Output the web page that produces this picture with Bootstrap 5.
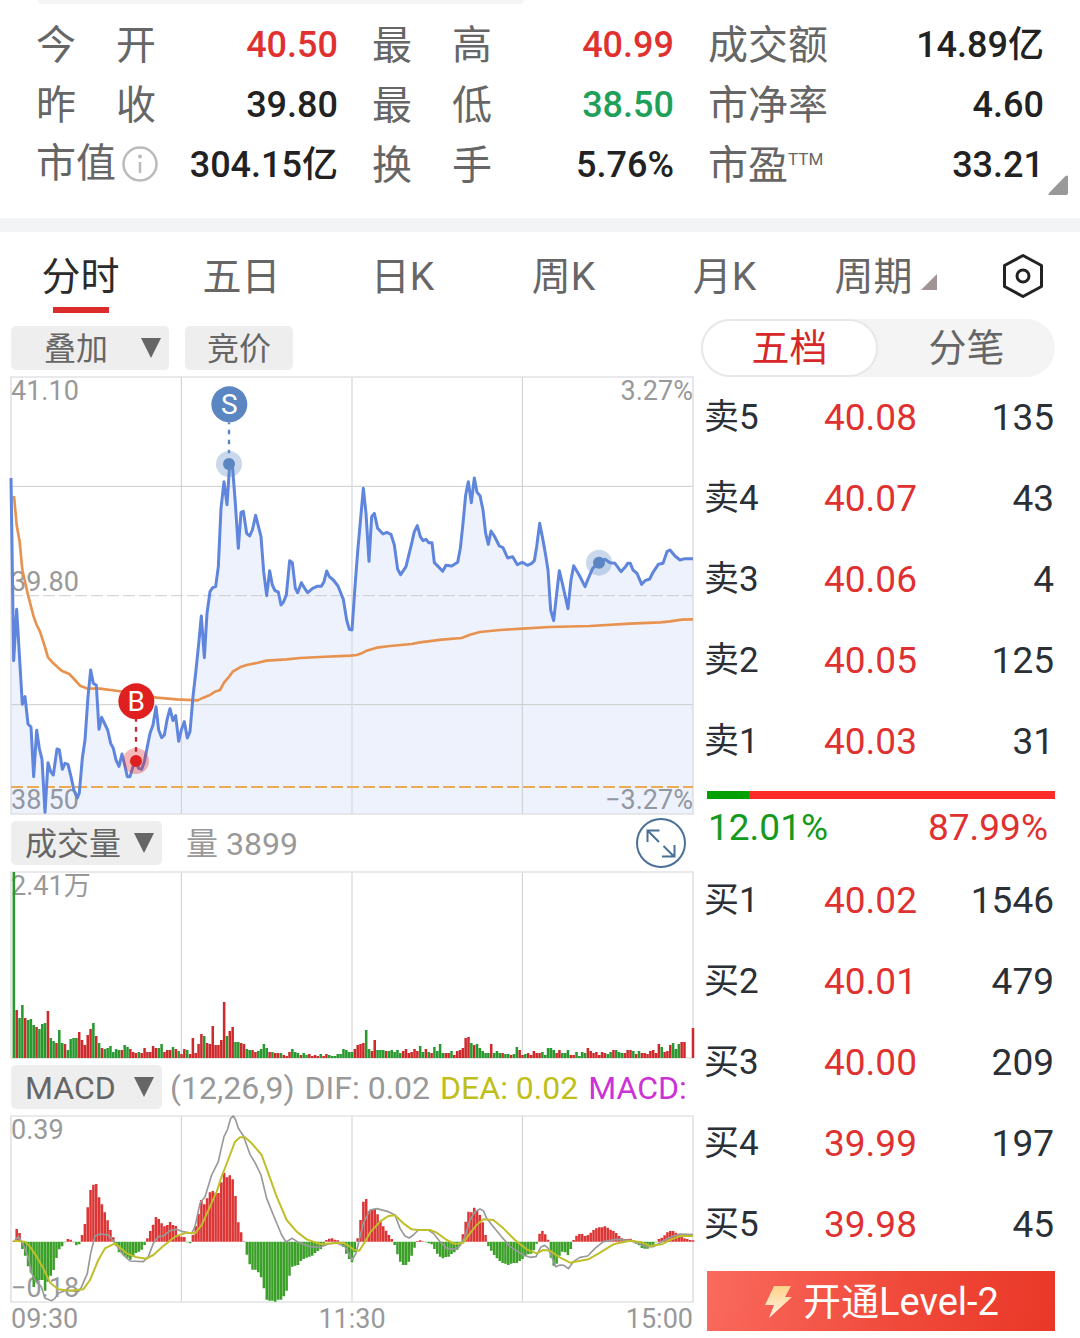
<!DOCTYPE html>
<html lang="zh-CN">
<head>
<meta charset="utf-8">
<meta name="viewport" content="width=device-width, initial-scale=1">
<title>分时行情</title>
<link href="https://cdn.jsdelivr.net/npm/bootstrap@5.3.0/dist/css/bootstrap.min.css" rel="stylesheet">
<style>
  body { font-family: Roboto, "Noto Sans CJK SC", sans-serif; background: #fff; color: #222; }
  .up { color: #e03131; }
  .down { color: #1fa05a; }

  /* key figures */
  .search-edge { height: 4px; width: 45%; margin-left: 38px; background: #f5f5f5; border-radius: 0 0 12px 12px; }
  .stats { padding: 10px 36px 24px; }
  .stats-grid { display: grid; grid-template-columns: 302fr 302fr 336fr; column-gap: 34px; grid-auto-rows: 60px; }
  .stat { font-size: 36px; line-height: 62px; }
  .stat dt { font-size: 40px; font-weight: 400; line-height: 64px; color: #666; width: 120px; text-align: justify; text-align-last: justify; white-space: nowrap; }
  .stat dt.tight { text-align-last: left; }
  .stat dt svg { margin-right: -2px; }
  .stat dd { font-weight: 500; white-space: nowrap; }
  .stat dt sup { font-size: 17px; top: -14px; line-height: 0; }
  .corner { right: 12px; bottom: 23px; }
  .band { height: 14px; background: #f3f4f6; }

  /* period tabs */
  .period-tabs { height: 87px; }
  .period-tabs .nav-link { flex: 161 1 0; height: 87px; padding: 0; color: #666; font-size: 39px; line-height: 90px; text-align: center; position: relative; white-space: nowrap; }
  .period-tabs .nav-link.active { color: #2b2b2b; }
  .period-tabs .nav-link.active::after { content: ""; position: absolute; left: 50%; bottom: 6px; width: 56px; height: 6px; margin-left: -28px; background: #db2b2b; }
  .gear { flex: 114 1 0; height: 87px; }

  .market { display: grid; grid-template-columns: 682fr 354fr; column-gap: 8px; padding: 0 25px 0 11px; }

  /* chart toolbars */
  .toolbar { height: 44px; margin: 7px 0; font-size: 32px; line-height: 47px; color: #999; white-space: nowrap; }
  .chip, .form-select.chip { height: 44px; padding: 3px 0 0 14px; border: 0; border-radius: 5px; background-color: #eee; color: #666; font-size: 32px; line-height: 41px; }
  .form-select.chip { width: 151px; background-position: right 8px center; background-size: 20px 20px;
    --bs-form-select-bg-img: url("data:image/svg+xml,%3csvg xmlns='http://www.w3.org/2000/svg' viewBox='0 0 20 20'%3e%3cpath fill='%23666' d='M0 0h20L10 20z'/%3e%3c/svg%3e"); }
  .form-select.chip.wide { width: 158px; padding-left: 33px; }
  button.chip { padding: 3px 22px 0; }
  .indicator { gap: 10px; }
  .expand-btn { width: 50px; height: 50px; margin: -3px 7px -3px auto; }
  .dea { color: #bfbf1c; }
  .macd { color: #cc33d6; }

  .plot svg { display: block; width: 100%; height: auto; overflow: visible; position: relative; }
  .tick { position: absolute; font-size: 27px; line-height: 28px; color: #999; }
  .time-axis { font-size: 27px; line-height: 34px; color: #999; padding-bottom: 2px; }

  /* order book */
  .seg { height: 58px; background: #f4f4f4; }
  .seg .btn { flex: 1 1 0; font-size: 38px; line-height: 52px; padding: 0; border: 2px solid transparent; color: #666; }
  .seg .btn.active { background: #fff; border-color: #e8e8e8; color: #d62828; }
  .book { font-size: 37px; color: #2b2f36; margin: 0; }
  .book > :not(caption) > * > * { padding: 0; height: 81px; line-height: 80px; color: inherit; white-space: nowrap; vertical-align: middle; }
  .book th { font-size: 35px; font-weight: 400; width: 123px; padding-left: 3px !important; }
  .book td.px { color: #e03131 !important; }
  .book td.qty { text-align: right; padding-right: 1px !important; }
  .ratio { width: auto; height: 8px; margin: 9px 0 8px 6px; border-radius: 0; background: #ff2a2a; }
  .ratio .progress-bar { background: #00a000; }
  .ratio-text { font-size: 37px; line-height: 42px; padding: 0 7px; margin-bottom: 11px; }
  .level2 { height: 60px; margin: 6px 0 7px 6px; border: 0; border-radius: 0; color: #fff; font-size: 38px; line-height: 60px; padding: 2px 0 0; background: linear-gradient(100deg, #fa6a5e, #f04a3b 55%, #e93727); }
</style>
<script src="https://cdn.jsdelivr.net/npm/bootstrap@5.3.0/dist/js/bootstrap.bundle.min.js"></script>
</head>
<body>
<header class="position-relative">
  <div class="search-edge"></div>
  <div class="stats">
    <dl class="stats-grid mb-0">
      <div class="stat d-flex justify-content-between"><dt>今 开</dt><dd class="mb-0 up">40.50</dd></div>
      <div class="stat d-flex justify-content-between"><dt>最 高</dt><dd class="mb-0 up">40.99</dd></div>
      <div class="stat d-flex justify-content-between"><dt>成交额</dt><dd class="mb-0">14.89亿</dd></div>
      <div class="stat d-flex justify-content-between"><dt>昨 收</dt><dd class="mb-0">39.80</dd></div>
      <div class="stat d-flex justify-content-between"><dt>最 低</dt><dd class="mb-0 down">38.50</dd></div>
      <div class="stat d-flex justify-content-between"><dt>市净率</dt><dd class="mb-0">4.60</dd></div>
      <div class="stat d-flex justify-content-between"><dt class="tight d-flex align-items-center justify-content-between">市值<svg width="36" height="36" viewBox="0 0 36 36" fill="none" stroke="#bbb" aria-hidden="true"><circle cx="18" cy="18" r="16.5" stroke-width="2.5"/><circle cx="18" cy="10.500" r="2" fill="#bbb" stroke="none"/><path d="M18 16v11" stroke-width="2.500"/></svg></dt><dd class="mb-0">304.15亿</dd></div>
      <div class="stat d-flex justify-content-between"><dt>换 手</dt><dd class="mb-0">5.76%</dd></div>
      <div class="stat d-flex justify-content-between"><dt class="tight">市盈<sup>TTM</sup></dt><dd class="mb-0">33.21</dd></div>
    </dl>
  </div>
  <svg class="corner position-absolute" width="20" height="20" viewBox="0 0 20 20" aria-hidden="true"><path d="M1.500 20Q-.5 20 1 18L17.500 1Q20-.5 20 2v16q0 2-2 2z" fill="#999"/></svg>
</header>
<div class="band"></div>

<nav class="nav flex-nowrap period-tabs">
  <a class="nav-link active" href="#" aria-current="page">分时</a>
  <a class="nav-link" href="#">五日</a>
  <a class="nav-link" href="#">日K</a>
  <a class="nav-link" href="#">周K</a>
  <a class="nav-link" href="#">月K</a>
  <a class="nav-link" href="#">周期<svg class="align-baseline ms-2" width="16" height="16" viewBox="0 0 16 16" aria-hidden="true"><path d="M16 0v16H0z" fill="#a09494"/></svg></a>
  <button class="btn gear border-0 p-0" type="button" aria-label="设置"><svg width="42" height="46" viewBox="0 0 42 46" fill="none" stroke="#222" stroke-width="3" stroke-linejoin="round"><path d="M21 2.500 39.500 12.500v21L21 43.500 2.500 33.500v-21z"/><circle cx="21" cy="23" r="6"/></svg></button>
</nav>

<main class="market">
  <section>
    <div class="toolbar d-flex">
      <select class="form-select chip wide me-3" aria-label="叠加"><option>叠加</option></select>
      <button class="chip" type="button">竞价</button>
    </div>

    <div class="plot position-relative">
      <span class="tick top-0 start-0">41.10</span>
      <span class="tick top-0 end-0">3.27%</span>
      <span class="tick start-0 bottom-50">39.80</span>
      <span class="tick start-0 bottom-0">38.50</span>
      <span class="tick end-0 bottom-0">−3.27%</span>
      <svg viewBox="33 21 2046 1311" fill="none" role="img" aria-label="分时走势">
        <path id="area" fill="#5f86f0" fill-opacity=".11"/>
        <g stroke="#ccc" stroke-width="3"><path d="M33 349H2079M33 1004H2079M544 21V1332M1567 21V1332"/><path d="M33 677H2079" stroke-dasharray="36 12"/></g>
        <path d="M33 21H2079V1332H33zM1056 21V1332" stroke="#d9dbe0" stroke-opacity=".8" stroke-width="5"/>
        <path d="M33 1251H2079" stroke="#ecaa55" stroke-width="6" stroke-dasharray="36 12"/>
        <polyline stroke="#e8924f" stroke-width="8" stroke-linejoin="round" points="42,378 50,465 59,515 67,600 84,675 101,740 110,765 120,785 133,825 144,862 160,880 185,902 208,912 225,930 240,947 260,955 300,956 355,963 410,972 470,983 530,988 593,991 610,983 630,975 645,965 660,960 672,938 685,923 698,905 720,892 740,885 770,879 800,872 860,868 900,864 960,861 1050,857 1070,855 1085,850 1100,842 1130,833 1170,828 1235,822 1260,817 1325,809 1385,804 1410,794 1440,786 1500,780 1567,776 1650,771 1770,768 1890,761 1980,757 2010,754 2045,749 2079,748"/>
        <polyline id="price" stroke="#5f86dc" stroke-width="9" stroke-linejoin="round" points="33,324 41,872 50,718 67,1003 75,980 84,1062 93,1071 101,1220 110,1081 118,1135 126,1168 135,1327 144,1178 152,1205 160,1215 171,1137 178,1140 187,1198 195,1180 204,1183 213,1220 222,1262 232,1284 238,1268 247,1165 255,1110 264,980 272,900 280,940 289,946 297,1078 305,1042 323,1080 332,1120 340,1135 348,1170 357,1189 366,1152 374,1185 382,1220 390,1220 399,1190 408,1175 416,1195 425,1198 433,1175 442,1130 450,1090 459,1065 468,1010 476,1080 485,1103 493,1095 502,1045 510,1016 519,1052 527,1037 536,1114 544,1080 553,1055 562,1104 570,1085 579,980 588,900 595,832 604,738 613,863 621,730 630,665 638,653 647,650 655,590 663,415 672,335 681,404 689,283 698,295 706,400 715,535 723,427 730,424 740,490 749,498 757,480 767,436 783,500 791,605 800,677 809,602 817,645 825,662 835,666 843,705 850,697 859,675 869,572 877,578 886,655 893,668 904,638 914,655 923,668 938,655 951,649 964,649 972,635 980,603 988,620 1000,630 1014,648 1030,688 1040,750 1048,778 1056,780 1065,650 1073,545 1090,355 1098,430 1107,574 1115,440 1123,430 1133,475 1149,492 1160,487 1173,493 1183,525 1193,598 1202,614 1218,590 1235,520 1243,485 1252,467 1261,500 1269,512 1278,508 1286,518 1296,518 1303,578 1318,593 1328,604 1338,586 1355,588 1373,577 1381,535 1389,460 1397,375 1405,335 1414,398 1423,324 1431,367 1440,377 1449,420 1457,490 1465,523 1473,483 1483,498 1498,528 1509,533 1523,564 1538,560 1552,584 1567,577 1582,586 1595,580 1603,572 1610,530 1619,460 1627,500 1636,550 1644,600 1652,720 1661,752 1669,680 1678,602 1687,640 1704,716 1713,630 1721,587 1739,618 1755,650 1765,625 1778,595 1797,578 1815,568 1830,578 1845,580 1863,605 1875,592 1883,580 1891,580 1899,600 1911,610 1925,643 1935,632 1949,627 1959,607 1975,583 1989,580 2001,545 2010,540 2025,558 2040,570 2055,566 2079,566"/>
        <g fill="#5b86c2"><path d="M687 157V250" stroke="#5b86c2" stroke-width="7" stroke-dasharray="14 16" stroke-dashoffset="8"/><circle cx="687" cy="282" r="39" fill-opacity=".32"/><circle cx="687" cy="282" r="18"/><circle cx="688" cy="103" r="54"/><circle cx="1797" cy="578" r="39" fill-opacity=".32"/><circle cx="1797" cy="578" r="18"/></g>
        <g fill="#e02020"><path d="M408 1047V1150" stroke="#c22a35" stroke-width="7" stroke-dasharray="14 16" stroke-dashoffset="6"/><circle cx="408" cy="1173" r="39" fill-opacity=".32"/><circle cx="408" cy="1173" r="18"/><circle cx="409" cy="994" r="54"/></g>
        <g fill="#fff" font-size="84" text-anchor="middle"><text x="688" y="133">S</text><text x="409" y="1024">B</text></g>
      </svg>
    </div>

    <div class="toolbar d-flex">
      <select class="form-select chip" aria-label="副图指标一"><option>成交量</option></select>
      <span class="ms-4">量 3899</span>
      <button class="expand-btn btn border-0 p-0 d-flex" type="button" aria-label="全屏"><svg width="50" height="50" viewBox="0 0 50 50" fill="none" stroke="#4b7096" stroke-width="2"><circle cx="25" cy="25" r="24"/><path d="M23 24 11.500 12.500M11.500 24V12.500H23.500M27.500 28 38 38.500M38.500 27v11.500H26"/></svg></button>
    </div>

    <div class="plot position-relative">
      <span class="tick top-0 start-0">2.41万</span>
      <svg viewBox="33 171 2046 558" fill="none" role="img" aria-label="成交量">
        <path d="M544 171V729M1567 171V729" stroke="#ccc" stroke-width="3"/>
        <path d="M33 171H2079V729H33zM1056 171V729" stroke="#e3e3e3" stroke-width="5"/>
        <path id="volUp" fill="#cc2a2d"/><path id="volDown" fill="#27992f"/>
      </svg>
    </div>

    <div class="toolbar d-flex">
      <select class="form-select chip flex-shrink-0" aria-label="副图指标二"><option>MACD</option></select>
      <div class="d-flex indicator ms-2"><span>(12,26,9)</span><span>DIF: 0.02</span><span class="dea">DEA: 0.02</span><span class="macd">MACD:</span></div>
    </div>

    <div class="plot position-relative">
      <span class="tick top-0 start-0">0.39</span>
      <span class="tick bottom-0 start-0">−0.18</span>
      <svg viewBox="33 168 2046 558" fill="none" role="img" aria-label="MACD">
        <path d="M544 168V726M1567 168V726" stroke="#ccc" stroke-width="3"/>
        <path d="M33 168H2079V726H33zM1056 168V726" stroke="#e3e3e3" stroke-width="5"/>
        <path id="macdUp" fill="#dc3535"/><path id="macdDown" fill="#3ba028"/>
        <polyline stroke="#999" stroke-width="5" stroke-linejoin="round" points="42,545 55,530 67,548 84,590 95,640 110,668 124,680 135,715 155,722 165,715 175,700 200,690 235,695 245,680 262,640 272,580 285,528 300,522 325,525 345,550 370,585 390,603 430,605 445,590 460,550 475,530 490,528 510,512 530,508 545,514 575,520 585,500 600,430 615,410 635,345 655,305 665,260 672,230 682,210 692,175 700,168 707,180 715,205 730,227 750,283 765,308 783,345 800,415 820,465 845,525 858,546 877,535 895,547 930,560 960,562 985,552 1010,548 1035,560 1056,600 1068,580 1080,530 1090,490 1110,450 1130,446 1165,455 1185,465 1200,505 1215,528 1227,534 1240,525 1255,510 1285,510 1300,520 1320,545 1340,565 1360,568 1378,560 1395,530 1410,480 1425,455 1440,447 1450,452 1460,475 1480,500 1505,530 1530,560 1570,585 1590,592 1608,590 1622,562 1634,556 1645,565 1655,590 1667,620 1680,615 1692,616 1705,626 1720,605 1740,592 1763,588 1785,565 1810,545 1850,538 1890,542 1915,550 1940,561 1960,560 1985,545 2015,530 2040,522 2079,524"/>
        <polyline stroke="#bfbf2a" stroke-width="6" stroke-linejoin="round" points="42,542 75,545 90,560 110,590 130,625 150,668 175,688 210,692 250,688 270,660 295,600 315,565 345,550 380,580 410,592 440,596 460,585 490,558 525,530 560,518 585,520 605,495 630,440 650,395 665,350 690,285 705,245 720,232 735,232 755,250 785,285 805,340 830,410 860,480 890,515 920,538 960,552 1030,548 1050,560 1062,570 1078,572 1095,545 1110,518 1140,485 1165,468 1185,466 1210,490 1235,508 1255,510 1290,510 1310,518 1340,540 1365,552 1390,548 1410,520 1430,495 1450,478 1480,480 1510,505 1545,540 1580,568 1610,580 1630,570 1650,572 1675,590 1710,608 1765,598 1800,578 1840,553 1890,542 1925,547 1950,558 1985,553 2010,540 2040,528 2079,528"/>
      </svg>
    </div>
    <div class="time-axis d-flex justify-content-between"><span>09:30</span><span>11:30</span><span>15:00</span></div>
  </section>

  <aside>
    <div class="seg d-flex rounded-pill" role="group" aria-label="盘口">
      <button type="button" class="btn rounded-pill active">五档</button>
      <button type="button" class="btn rounded-pill">分笔</button>
    </div>
    <table class="table table-borderless book">
      <tbody>
        <tr><th scope="row">卖5</th><td class="px">40.08</td><td class="qty">135</td></tr>
        <tr><th scope="row">卖4</th><td class="px">40.07</td><td class="qty">43</td></tr>
        <tr><th scope="row">卖3</th><td class="px">40.06</td><td class="qty">4</td></tr>
        <tr><th scope="row">卖2</th><td class="px">40.05</td><td class="qty">125</td></tr>
        <tr><th scope="row">卖1</th><td class="px">40.03</td><td class="qty">31</td></tr>
      </tbody>
    </table>
    <div class="progress ratio"><div class="progress-bar" style="width:12.01%"></div></div>
    <div class="ratio-text d-flex justify-content-between"><span style="color:#149a1c">12.01%</span><span class="up">87.99%</span></div>
    <table class="table table-borderless book">
      <tbody>
        <tr><th scope="row">买1</th><td class="px">40.02</td><td class="qty">1546</td></tr>
        <tr><th scope="row">买2</th><td class="px">40.01</td><td class="qty">479</td></tr>
        <tr><th scope="row">买3</th><td class="px">40.00</td><td class="qty">209</td></tr>
        <tr><th scope="row">买4</th><td class="px">39.99</td><td class="qty">197</td></tr>
        <tr><th scope="row">买5</th><td class="px">39.98</td><td class="qty">45</td></tr>
      </tbody>
    </table>
    <div class="d-flex"><button type="button" class="btn level2 flex-grow-1 d-flex justify-content-center align-items-center"><svg class="me-2" width="32" height="34" viewBox="0 0 32 34" aria-hidden="true"><defs><linearGradient id="bolt" x1="0" y1="0" x2="0" y2="1"><stop offset="0" stop-color="#ffd38a"/><stop offset="1" stop-color="#fff3e6"/></linearGradient></defs><path fill="url(#bolt)" d="M11 1h17l-6 11h7L6 33l5-13H2z"/></svg>开通Level-2</button></div>
  </aside>
</main>

<script>
  // One bar per trading minute; r = rise, g = fall, followed by the bar height.
  const volume = `g186 r48 g40 g53 r40 g38 g39 g33 r31 g29 g34 g35 r47 g20 g17 r15 g28 g15 r14 g8 g19 g20 g20 r26 r18 r13 r23 r29 g35 r22 g15 r10 g9 g10 g12 g6 g9 g8 r8 g13 g11 r9 r6 r5 g6 r5 r10 r6 r6 r12 r10 g10 g14 r6 r8 r8 g11 r9 g7 r4 r9 g8 r4 r20 r5 r14 r24 g22 r15 r14 r32 r13 r13 r18 r56 g22 r27 r31 g16 g16 r15 r14 g9 g8 r8 r6 g7 g9 g14 g10 r6 g6 r5 r5 g5 r3 r2 r6 g9 g6 g5 r3 g5 g3 r4 r2 r3 r2 g4 r2 r4 g3 g2 g2 g4 g4 g9 g8 g6 g6
    r9 r13 r14 r15 g28 g9 r7 r18 g8 g8 g8 r7 g7 g8 g6 g8 g5 r7 r9 r5 r6 r9 r7 g12 g6 r9 g6 r5 g11 g7 g14 g5 r5 r5 g7 r3 r7 r8 r10 r20 r21 g15 r13 g14 g10 g7 g5 g5 r14 g5 g7 g5 r5 g4 g4 r3 g4 g11 r8 r3 g4 r5 r3 r7 r5 r5 g6 g3 g10 g10 g8 r5 r8 g5 g5 g8 r3 r3 g6 g2 g6 g5 r10 r7 r5 r6 r3 r6 r5 g4 g6 r8 g8 g6 g5 r5 r8 r8 g7 r4 g7 r5 r5 r4 r7 r8 r5 r14 g11 r6 r7 r13 g15 g9 g14 r16 r16 r0 r0 r30`.split(/\s+/);
  const macd = [3,38,26,-20,-40,-72,-91,-134,-120,-113,-113,-145,-118,-100,-83,-47,-21,-12,0,8,6,0,-9,-6,20,53,103,155,171,173,133,112,88,64,35,13,-10,-30,-32,-40,-46,-52,-43,-32,-28,-22,-8,10,32,51,74,68,55,46,50,59,50,47,20,15,14,0,-3,20,47,83,125,112,130,148,152,147,146,178,207,193,199,187,137,58,28,1,-37,-66,-82,-82,-90,-105,-138,-172,-175,-175,-178,-172,-172,-162,-145,-100,-73,-70,-68,-56,-50,-46,-43,-40,-32,-26,-20,-10,5,9,10,6,4,-6,-14,-34,-50,-60,
    -30,10,65,120,128,92,98,98,82,62,46,33,20,8,-8,-36,-58,-68,-68,-58,-40,-16,2,4,1,0,-3,-6,-20,-34,-43,-48,-44,-43,-35,-30,-22,-10,22,60,90,88,102,93,80,58,20,-12,-25,-38,-48,-56,-62,-64,-68,-64,-62,-62,-56,-50,-42,-36,-34,-24,-4,24,32,22,6,-46,-70,-64,-40,-28,-30,-38,-20,5,18,23,23,17,20,27,35,40,43,43,46,42,36,32,26,17,10,8,8,9,4,-4,-9,-17,-19,-19,-13,-8,0,8,12,19,28,32,32,27,21,15,10,8,5,4];
  const bar = (i, base, h) => {
    const x = 33 + (i + 1) * 2046 / 240;
    return `M${(x - 3.8).toFixed(1)} ${base}h7.600v${-h}h-7.600z`;
  };
  const draw = (id, d) => document.getElementById(id).setAttribute('d', d);
  const vol = k => volume.map((v, i) => v[0] === k ? bar(i, 729, v.slice(1) * 3) : '').join('');
  draw('volUp', vol('r'));
  draw('volDown', vol('g'));
  draw('macdUp', macd.map((v, i) => v > 0 ? bar(i, 545, v) : '').join(''));
  draw('macdDown', macd.map((v, i) => v <= 0 ? bar(i, 545, v - 2) : '').join(''));
  draw('area', 'M' + document.getElementById('price').getAttribute('points') + ' 2079,1332 33,1332z');
</script>
</body>
</html>
